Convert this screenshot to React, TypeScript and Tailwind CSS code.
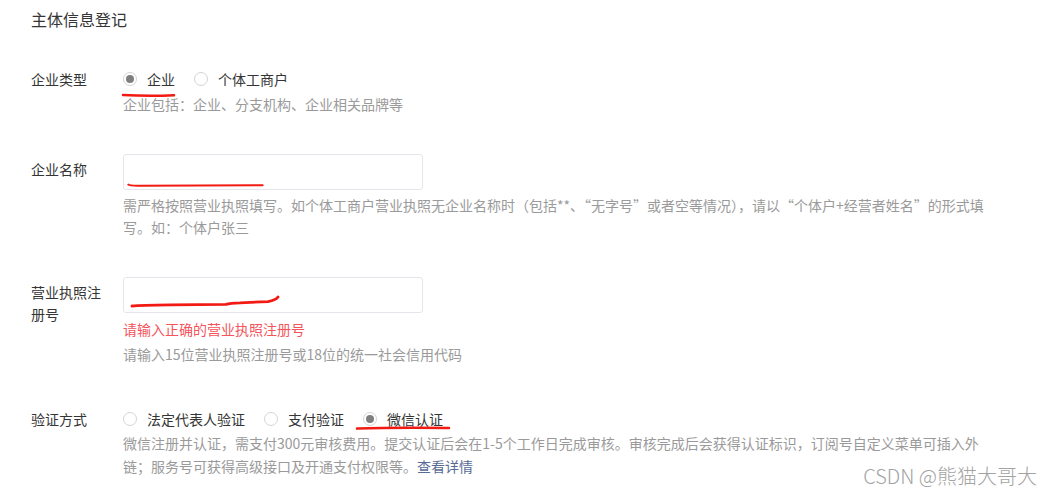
import React from "react";

const font = { fontFamily: '"Noto Sans CJK SC", "Microsoft YaHei", sans-serif' };

function Radio({ label, checked }: { label: string; checked?: boolean }) {
  return (
    <label className="flex items-center gap-[10px]">
      <span className="flex h-[14px] w-[14px] items-center justify-center rounded-full border border-[#d4d4d4] bg-white">
        {checked && <span className="h-[8px] w-[8px] rounded-full bg-[#7f7f7f]" />}
      </span>
      <span className="text-[14px] leading-[24px] text-[#353535]">{label}</span>
    </label>
  );
}

function Row({ label, children, labelClass = "" }: { label: string; children: React.ReactNode; labelClass?: string }) {
  return (
    <div className="flex">
      <div className={`w-[72px] mr-[20px] shrink-0 text-[14px] text-[#353535] ${labelClass}`}>{label}</div>
      <div className="relative min-w-0 flex-1">{children}</div>
    </div>
  );
}

function Scribble({ d, className }: { d: string; className: string }) {
  return (
    <svg className={`pointer-events-none absolute ${className}`} viewBox="0 0 200 12" preserveAspectRatio="none">
      <path d={d} fill="none" stroke="#f21a12" strokeWidth="3" strokeLinecap="round" strokeLinejoin="round" />
    </svg>
  );
}

export default function App() {
  return (
    <main className="relative h-[494px] w-[1051px] overflow-hidden bg-white pl-[31px] pt-[7px]" style={font}>
      <h1 className="text-[16px] leading-[24px] text-[#353535]">主体信息登记</h1>

      <div className="mt-[36px]">
        <Row label="企业类型" labelClass="leading-[24px]">
          <div className="flex items-center gap-[19px]">
            <Radio label="企业" checked />
            <Radio label="个体工商户" />
          </div>
          <svg className="pointer-events-none absolute left-[-2px] top-[25px] h-[6px] w-[56px]" viewBox="0 0 56 6">
            <path d="M2 3 Q 28 4.5 53 3.2" fill="none" stroke="#f21a12" strokeWidth="2.5" strokeLinecap="round" />
          </svg>
          <p className="mt-[2px] text-[14px] leading-[22px] text-[#9a9a9a]">企业包括：企业、分支机构、企业相关品牌等</p>
        </Row>
      </div>

      <div className="mt-[39px]">
        <Row label="企业名称" labelClass="pt-[3px] leading-[24px]">
          <div className="relative h-[36px] w-[300px] rounded-[3px] border border-[#e4e6eb] bg-white">
            <Scribble className="left-[3px] top-[25px] h-[8px] w-[137px]" d="M2 7 Q 4 9 20 8.6 L 198 8" />
          </div>
          <p className="mt-[4px] text-[14px] leading-[22px] text-[#9a9a9a]">
            需严格按照营业执照填写。如个体工商户营业执照无企业名称时（包括**、“无字号”或者空等情况），请以“个体户+经营者姓名”的形式填
            <br />
            写。如：个体户张三
          </p>
        </Row>
      </div>

      <div className="mt-[39px]">
        <Row label="营业执照注册号" labelClass="pt-[4px] leading-[22px]">
          <div className="relative h-[36px] w-[300px] rounded-[3px] border border-[#e4e6eb] bg-white">
            <svg className="pointer-events-none absolute left-[6px] top-[16px] h-[14px] w-[152px]" viewBox="0 0 152 14">
              <path
                d="M2 12 Q 10 11 40 10.8 L 96 10.4 Q 100 9 110 8.8 L 138 7.6 Q 146 6 148 3"
                fill="none"
                stroke="#f21a12"
                strokeWidth="2.8"
                strokeLinecap="round"
                strokeLinejoin="round"
              />
            </svg>
          </div>
          <p className="mt-[5px] text-[14px] leading-[22px] text-[#f4545c]">请输入正确的营业执照注册号</p>
          <p className="mt-[3px] text-[14px] leading-[22px] text-[#9a9a9a]">请输入15位营业执照注册号或18位的统一社会信用代码</p>
        </Row>
      </div>

      <div className="mt-[42px]">
        <Row label="验证方式" labelClass="leading-[24px]">
          <div className="flex items-center gap-[19px]">
            <Radio label="法定代表人验证" />
            <Radio label="支付验证" />
            <Radio label="微信认证" checked />
          </div>
          <svg className="pointer-events-none absolute left-[232px] top-[18px] h-[6px] w-[96px]" viewBox="0 0 96 6">
            <path d="M2 3.6 Q 40 2.2 94 3" fill="none" stroke="#f21a12" strokeWidth="2.5" strokeLinecap="round" />
          </svg>
          <p className="mt-[1px] text-[14px] leading-[23px] text-[#9a9a9a]">
            微信注册并认证，需支付300元审核费用。提交认证后会在1-5个工作日完成审核。审核完成后会获得认证标识，订阅号自定义菜单可插入外
            <br />
            链；服务号可获得高级接口及开通支付权限等。<a className="text-[#576b95]">查看详情</a>
          </p>
        </Row>
      </div>

      <div className="absolute bottom-[5px] right-[14px] text-[20px] font-light leading-[26px] text-[#a3a3a3]">CSDN @熊猫大哥大</div>
    </main>
  );
}
